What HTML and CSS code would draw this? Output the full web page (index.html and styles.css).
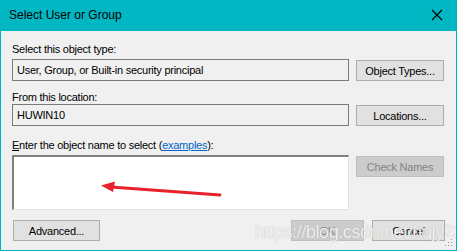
FILE: index.html
```html
<!DOCTYPE html>
<html>
<head>
<meta charset="utf-8">
<link rel="stylesheet" href="styles.css">
</head>
<body>
<div class="window">
  <div class="titlebar">
    <span class="title">Select User or Group</span>
    <svg class="close" width="12" height="12" viewBox="0 0 12 12"><path d="M1 1 L11 11 M11 1 L1 11" stroke="#000" stroke-width="1.2" fill="none"/></svg>
  </div>
  <div class="content">
    <div class="label l1">Select this object type:</div>
    <div class="row r1">
      <div class="field ro">User, Group, or Built-in security principal</div>
      <div class="btn">Object Types...</div>
    </div>
    <div class="label l2">From this location:</div>
    <div class="row r2">
      <div class="field ro">HUWIN10</div>
      <div class="btn">Locations...</div>
    </div>
    <div class="label l3"><u>E</u>nter the object name to select (<a class="link">examples</a>):</div>
    <div class="row r3">
      <div class="area"></div>
      <div class="btn disabled">Check Names</div>
    </div>
    <div class="bottom">
      <div class="btn adv">Advanced...</div>
      <div class="spacer"></div>
      <div class="btn small disabled">OK</div>
      <div class="btn small cancel">Cancel</div>
    </div>
  </div>
  <svg class="arrow" width="130" height="20" viewBox="0 0 130 20">
    <path d="M123 14 L14 6" stroke="#e8222a" stroke-width="3" stroke-linecap="round" fill="none"/>
    <path d="M4 4.5 L18 0.5 L16 11 Z" fill="#e8222a"/>
  </svg>
  <div class="watermark">https://blog.csdn.net/hujy23</div>
  <svg class="grip" width="8" height="8" viewBox="0 0 8 8">
    <rect x="6" y="0" width="1" height="1" fill="#9a9a9a"/>
    <rect x="3" y="3" width="1" height="1" fill="#9a9a9a"/>
    <rect x="6" y="3" width="1" height="1" fill="#9a9a9a"/>
    <rect x="0" y="6" width="1" height="1" fill="#9a9a9a"/>
    <rect x="3" y="6" width="1" height="1" fill="#9a9a9a"/>
    <rect x="6" y="6" width="1" height="1" fill="#9a9a9a"/>
  </svg>
</div>
</body>
</html>
```
FILE: styles.css
```css
html, body {
  margin: 0;
  padding: 0;
  background: #f0f0f0;
}
.window {
  position: relative;
  width: 457px;
  height: 251px;
  box-sizing: border-box;
  border: 1px solid #00b4c3;
  border-top: none;
  background: #f0f0f0;
  font-family: "Liberation Sans", Arial, sans-serif;
  font-size: 11px;
  letter-spacing: -0.25px;
  color: #000;
  overflow: hidden;
}
.titlebar {
  height: 31px;
  margin: 0 -1px;
  background: #00b7c3;
  display: flex;
  align-items: center;
  justify-content: space-between;
  padding: 0 14px 0 9px;
}
.title {
  font-family: "Liberation Sans", Arial, sans-serif;
  font-size: 12px;
  letter-spacing: 0;
  color: #000;
  padding-bottom: 1px;
}
.close {
  display: block;
  margin-top: -1px;
}
.content {
  padding: 0 11px;
  display: flex;
  flex-direction: column;
}
.label {
  line-height: 13px;
  height: 13px;
  white-space: nowrap;
}
.l1 { margin-top: 12px; }
.l2 { margin-top: 10px; }
.l3 { margin-top: 13px; }
.row {
  display: flex;
  align-items: flex-start;
  gap: 7px;
}
.r1 { margin-top: 3px; }
.r2 { margin-top: 0; }
.r3 { margin-top: 3px; }
.field {
  width: 337px;
  height: 22px;
  box-sizing: border-box;
  border: 1px solid #7a7a7a;
  padding: 3px 4px;
  line-height: 14px;
  white-space: nowrap;
}
.ro { background: #f0f0f0; }
.area {
  width: 337px;
  height: 55px;
  box-sizing: border-box;
  background: #fff;
  border-style: solid;
  border-width: 2px 1px 1px 2px;
  border-color: #808080 #e3e3e3 #e3e3e3 #808080;
}
.btn {
  width: 88px;
  height: 21px;
  box-sizing: border-box;
  border: 1px solid #adadad;
  background: #e1e1e1;
  display: flex;
  align-items: center;
  justify-content: center;
  margin-top: 1px;
  white-space: nowrap;
}
.btn.disabled {
  background: #cccccc;
  border-color: #bfbfbf;
  color: #838383;
}
.bottom {
  display: flex;
  margin-top: 10px;
  gap: 8px;
}
.bottom .btn { margin-top: 0; }
.adv {
  width: 87px;
  margin-left: 1px;
}
.spacer { flex: 1; }
.small { width: 73px; }
.cancel { border-color: #adadad; }
.link {
  color: #0066cc;
  text-decoration: underline;
}
.arrow {
  position: absolute;
  left: 96px;
  top: 181px;
}
.watermark {
  position: absolute;
  left: 254px;
  top: 222px;
  font-family: "Liberation Sans", Arial, sans-serif;
  font-size: 18px;
  letter-spacing: -0.4px;
  color: rgba(255, 255, 255, 0.85);
  text-shadow: 0 0 1px rgba(120, 120, 120, 0.6);
  white-space: nowrap;
}
.grip {
  position: absolute;
  right: 3px;
  bottom: 3px;
}
```
